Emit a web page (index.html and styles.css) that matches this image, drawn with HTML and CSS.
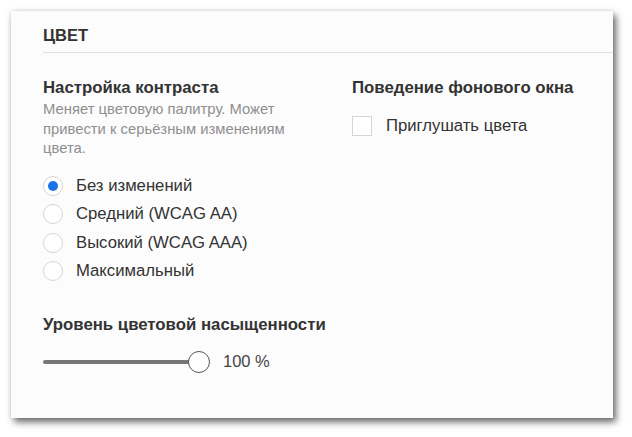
FILE: index.html
```html
<!DOCTYPE html>
<html lang="ru">
<head>
  <meta charset="UTF-8">
  <title>Цвет</title>
  <link rel="stylesheet" href="styles.css">
</head>
<body>

  <div class="panel">
    <h2 class="panel-title">ЦВЕТ</h2>

    <div class="columns">
      <!-- контраст -->
      <div class="group">
        <h3 class="group-title">Настройка контраста</h3>
        <p class="hint">Меняет цветовую палитру. Может привести к серьёзным изменениям цвета.</p>
        <ul class="radios">
          <li class="radio-row"><span class="radio checked"></span>Без изменений</li>
          <li class="radio-row"><span class="radio"></span>Средний (WCAG AA)</li>
          <li class="radio-row"><span class="radio"></span>Высокий (WCAG AAA)</li>
          <li class="radio-row"><span class="radio"></span>Максимальный</li>
        </ul>
      </div>

      <!-- фоновое окно -->
      <div class="group">
        <h3 class="group-title">Поведение фонового окна</h3>
        <div class="check-row"><span class="checkbox"></span>Приглушать цвета</div>
      </div>
    </div>

    <div class="saturation">
      <h3 class="group-title">Уровень цветовой насыщенности</h3>
      <div class="slider-row">
        <div class="slider">
          <div class="track"></div>
          <div class="thumb"></div>
        </div>
        <span class="value">100 %</span>
      </div>
    </div>
  </div>

</body>
</html>
```

FILE: styles.css
```css
body {
  margin: 0;
  padding-bottom: 19px;
  background: #ffffff;
  font-family: "Liberation Sans", Arial, sans-serif;
  color: #333;
}
.panel {
  margin: 11px 0 0 11px;
  width: 602px;
  height: 407px;
  box-sizing: border-box;
  background: #fcfcfc;
  padding: 0 0 0 32px;
  box-shadow: 3px 4px 7px rgba(0, 0, 0, 0.6), -1px -1px 4px rgba(0, 0, 0, 0.08);
}
.panel-title {
  margin: 0;
  padding: 14px 0 7px;
  font-size: 16.5px;
  line-height: 20px;
  font-weight: bold;
  color: #333;
  border-bottom: 1px solid #e0e0e0;
}
.columns {
  display: grid;
  grid-template-columns: 309px 1fr;
  padding-top: 24px;
}
.group-title {
  margin: 0;
  font-size: 16.8px;
  font-weight: bold;
  color: #333;
  line-height: 22px;
}
.hint {
  margin: 1px 0 0;
  width: 270px;
  font-size: 14.8px;
  line-height: 19.5px;
  color: #8f8f8f;
}
.radios {
  list-style: none;
  margin: 13px 0 0;
  padding: 0;
}
.radio-row {
  display: flex;
  align-items: center;
  height: 28.5px;
  font-size: 16.7px;
}
.radio {
  width: 20px;
  height: 20px;
  box-sizing: border-box;
  border: 1px solid #d6d6d6;
  border-radius: 50%;
  background: #fff;
  margin-right: 13px;
  position: relative;
}
.radio.checked::after {
  content: "";
  position: absolute;
  left: 4px;
  top: 4px;
  width: 10px;
  height: 10px;
  border-radius: 50%;
  background: #1a73e8;
}
.check-row {
  display: flex;
  align-items: center;
  margin-top: 17px;
  font-size: 16.7px;
}
.checkbox {
  width: 20px;
  height: 20px;
  box-sizing: border-box;
  border: 1px solid #d6d6d6;
  background: #fff;
  margin-right: 14px;
}
.saturation {
  margin-top: 28px;
}
.slider-row {
  display: flex;
  align-items: center;
  margin-top: 15px;
}
.slider {
  position: relative;
  width: 168px;
  height: 22px;
}
.track {
  position: absolute;
  left: 0;
  top: 9px;
  width: 156px;
  height: 4px;
  border-radius: 2px;
  background: #777;
}
.thumb {
  position: absolute;
  left: 145px;
  top: 0;
  width: 22px;
  height: 22px;
  box-sizing: border-box;
  border: 1px solid #555;
  border-radius: 50%;
  background: #fff;
}
.value {
  margin-left: 12px;
  font-size: 16.5px;
  color: #444;
}
```
